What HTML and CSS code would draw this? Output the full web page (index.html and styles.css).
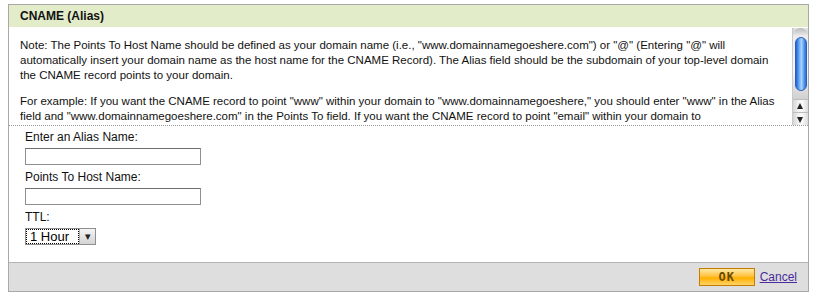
FILE: index.html
```html
<!DOCTYPE html>
<html lang="en">
<head>
  <meta charset="UTF-8" />
  <title>CNAME (Alias)</title>
  <link rel="stylesheet" href="styles.css">
</head>
<body>

  <!-- Dialog panel -->
  <div class="panel">
    <div class="panel-head">CNAME (Alias)</div>

    <!-- Help text with scrollbar -->
    <div class="help">
      <div class="help-text">
        <p>Note: The Points To Host Name should be defined as your domain name (i.e., "www.domainnamegoeshere.com") or "@" (Entering "@" will automatically insert your domain name as the host name for the CNAME Record). The Alias field should be the subdomain of your top-level domain the CNAME record points to your domain.</p>
        <p>For example: If you want the CNAME record to point "www" within your domain to "www.domainnamegoeshere," you should enter "www" in the Alias field and "www.domainnamegoeshere.com" in the Points To field. If you want the CNAME record to point "email" within your domain to</p>
      </div>
      <div class="scrollbar">
        <div class="track">
          <div class="thumb"></div>
        </div>
        <div class="arrow up"></div>
        <div class="arrow down"></div>
      </div>
    </div>

    <!-- Form fields -->
    <form class="fields">
      <label for="alias">Enter an Alias Name:</label>
      <input type="text" id="alias">
      <label for="host">Points To Host Name:</label>
      <input type="text" id="host">
      <label for="ttl">TTL:</label>
      <span class="select">
        <select id="ttl">
          <option>1 Hour</option>
          <option>1/2 Hour</option>
          <option>1 Day</option>
        </select>
      </span>
    </form>

    <div class="panel-foot">
      <button type="button" class="btn-ok">OK</button>
      <a href="#" class="cancel">Cancel</a>
    </div>
  </div>

</body>
</html>
```

FILE: styles.css
```css
body {
  margin: 4px 9px 0 8px;
  font-family: 'Liberation Sans', Arial, sans-serif;
  font-size: 12px;
  color: #111;
  background: #fff;
}

.panel {
  border: 1px solid #a9a9a9;
  height: 286px;
  display: flex;
  flex-direction: column;
}

.panel-head {
  background: #e2ecc9;
  height: 22px;
  line-height: 22px;
  padding: 0 11px;
  font-size: 12px;
  font-weight: bold;
  color: #111;
}

/* Help text */
.help {
  display: flex;
  height: 97px;
  border-bottom: 1px dotted #999;
  margin-top: 1px;
}

.help-text {
  flex: 1;
  overflow: hidden;
  padding: 10px 12px 0 11px;
  font-size: 11.5px;
  line-height: 15px;
}

.help-text p {
  margin: 0 0 11px;
}

/* Aqua style scrollbar */
.scrollbar {
  width: 15px;
  display: flex;
  flex-direction: column;
  background: linear-gradient(90deg, #d6d6d6, #f4f4f4 40%, #fafafa 60%, #dcdcdc);
  border-left: 1px solid #c9c9c9;
}

.track {
  flex: 1;
  padding: 9px 1px 8px;
  display: flex;
  border-radius: 7px 7px 0 0;
  background: linear-gradient(180deg, #b9b9b9, #ececec 8px, #f6f6f6 60%, #d0d0d0);
}

.thumb {
  flex: 1;
  margin: 0 0 0 1px;
  width: 11px;
  border-radius: 6px;
  border: 1px solid #2a5fbf;
  background: linear-gradient(90deg, #1f5fd6, #6fb3f7 35%, #a9d3fb 55%, #4b8ee8 85%, #2d6ddb);
}

.arrow {
  height: 12px;
  border-top: 1px solid #bdbdbd;
  position: relative;
}

.arrow::after {
  content: '';
  position: absolute;
  left: 4px;
  border-left: 3.5px solid transparent;
  border-right: 3.5px solid transparent;
}

.arrow.up::after {
  top: 3px;
  border-bottom: 6px solid #222;
}

.arrow.down::after {
  top: 4px;
  border-top: 6px solid #222;
}

/* Form */
.fields {
  flex: 1;
  display: flex;
  flex-direction: column;
  align-items: flex-start;
  padding: 4px 16px 0;
  margin: 0;
}

.fields label {
  line-height: 15px;
  font-size: 12px;
  margin-bottom: 3px;
}

.fields input {
  width: 176px;
  height: 17px;
  box-sizing: border-box;
  border: 1px solid #8f8f8f;
  border-top-color: #6f6f6f;
  margin: 0 0 5px;
  padding: 0 3px;
  font: 12px 'Liberation Sans', Arial, sans-serif;
}

.select {
  position: relative;
  display: inline-block;
  width: 71px;
  height: 17px;
  border: 1px solid #8f8f8f;
  box-sizing: border-box;
  background: #fff;
}

.select select {
  appearance: none;
  -webkit-appearance: none;
  border: 1px dotted #000;
  width: 53px;
  height: 15px;
  padding: 0 0 0 3px;
  margin: 0;
  background: #fff;
  font: 13px 'Liberation Sans', Arial, sans-serif;
  line-height: 13px;
  color: #000;
}

.select::after {
  content: '▾';
  position: absolute;
  right: 0;
  top: 0;
  width: 15px;
  height: 15px;
  line-height: 14px;
  text-align: center;
  font-size: 11px;
  color: #222;
  background: linear-gradient(180deg, #f4f4f4, #d4d4d4);
  border-left: 1px solid #a9a9a9;
  pointer-events: none;
}

/* Footer */
.panel-foot {
  height: 28px;
  border-top: 1px solid #b5b5b5;
  background: #dedede;
  display: flex;
  align-items: center;
  justify-content: flex-end;
  padding: 0 11px 0 0;
}

.btn-ok {
  width: 56px;
  height: 18px;
  padding: 0;
  margin: 0 5px 0 0;
  border: 1px solid #c47d00;
  background: linear-gradient(180deg, #ffe9a6, #ffc23d 45%, #ffb000 55%, #ffd266);
  color: #6a4a00;
  font: bold 12px 'DejaVu Sans Mono', monospace;
  letter-spacing: 1px;
}

.cancel {
  color: #4b2c9c;
  font-size: 12px;
  text-decoration: underline;
}
```
